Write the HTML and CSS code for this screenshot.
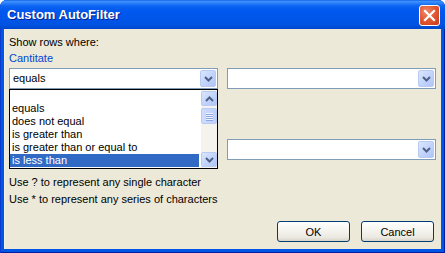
FILE: index.html
```html
<!DOCTYPE html>
<html>
<head>
<meta charset="utf-8">
<link rel="stylesheet" href="styles.css">
</head>
<body>
<div class="window">
  <div class="titlebar">
    <span class="title">Custom AutoFilter</span>
    <span class="close">
      <svg width="13" height="13" viewBox="0 0 13 13"><path d="M2 2 L11 11 M11 2 L2 11" stroke="#fff" stroke-width="2.2" stroke-linecap="square"/></svg>
    </span>
  </div>
  <div class="client">
    <div class="caption">Show rows where:</div>
    <div class="group-label">Cantitate</div>
    <div class="row row1">
      <div class="combo-wrap">
        <div class="combo">
          <span class="value">equals</span>
          <span class="drop"><svg width="9" height="6" viewBox="0 0 9 6"><path d="M1 1 L4.5 4.5 L8 1" fill="none" stroke="#4d6185" stroke-width="2"/></svg></span>
        </div>
        <div class="listbox">
          <ul class="items">
            <li class="blank"></li>
            <li>equals</li>
            <li>does not equal</li>
            <li>is greater than</li>
            <li>is greater than or equal to</li>
            <li class="selected">is less than</li>
          </ul>
          <div class="scrollbar">
            <span class="sbtn"><svg width="9" height="6" viewBox="0 0 9 6"><path d="M1 5 L4.5 1.5 L8 5" fill="none" stroke="#4d6185" stroke-width="2"/></svg></span>
            <span class="thumb"><i></i><i></i><i></i><i></i></span>
            <span class="track"></span>
            <span class="sbtn"><svg width="9" height="6" viewBox="0 0 9 6"><path d="M1 1 L4.5 4.5 L8 1" fill="none" stroke="#4d6185" stroke-width="2"/></svg></span>
          </div>
        </div>
      </div>
      <div class="combo">
        <span class="value"></span>
        <span class="drop"><svg width="9" height="6" viewBox="0 0 9 6"><path d="M1 1 L4.5 4.5 L8 1" fill="none" stroke="#4d6185" stroke-width="2"/></svg></span>
      </div>
    </div>
    <div class="row row2">
      <div class="combo">
        <span class="value"></span>
        <span class="drop"><svg width="9" height="6" viewBox="0 0 9 6"><path d="M1 1 L4.5 4.5 L8 1" fill="none" stroke="#4d6185" stroke-width="2"/></svg></span>
      </div>
      <div class="combo">
        <span class="value"></span>
        <span class="drop"><svg width="9" height="6" viewBox="0 0 9 6"><path d="M1 1 L4.5 4.5 L8 1" fill="none" stroke="#4d6185" stroke-width="2"/></svg></span>
      </div>
    </div>
    <div class="hints">
      <div>Use ? to represent any single character</div>
      <div>Use * to represent any series of characters</div>
    </div>
    <div class="buttons">
      <span class="btn">OK</span>
      <span class="btn">Cancel</span>
    </div>
  </div>
</div>
</body>
</html>
```
FILE: styles.css
```css
html, body {
  margin: 0;
  padding: 0;
  background: #ffffff;
}
.window {
  width: 445px;
  height: 253px;
  box-sizing: border-box;
  display: flex;
  flex-direction: column;
  background: #0055e5;
  border-radius: 7px 7px 0 0;
  overflow: hidden;
  font-family: "Liberation Sans", Arial, sans-serif;
  font-size: 11px;
  color: #000;
  box-shadow: inset 1px 0 0 #0a3ccf, inset -1px 0 0 #001ea0, inset 0 -1px 0 #001ea0;
}
.titlebar {
  height: 29px;
  flex: none;
  display: flex;
  align-items: center;
  justify-content: space-between;
  padding: 0 5px 0 7px;
  background: linear-gradient(to bottom, #0a4fd8 0px, #3d95ff 1px, #2d82fa 3px, #0b63f0 6px, #0058ee 11px, #0055e8 20px, #0052df 25px, #0047cc 29px);
}
.title {
  color: #fff;
  font-weight: bold;
  font-size: 13px;
  text-shadow: 1px 1px 0 #0a1e8c;
  margin-top: -1px;
}
.close {
  width: 21px;
  height: 21px;
  box-sizing: border-box;
  border: 1px solid #fff;
  border-radius: 3px;
  background: radial-gradient(circle at 35% 30%, #f08a6a 0%, #e35a35 45%, #c8391a 100%);
  display: flex;
  align-items: center;
  justify-content: center;
  margin-top: 2px;
}
.client {
  flex: 1;
  margin: 0 4px 4px 4px;
  background: #ece9d8;
  padding: 7px 5px 7px 5px;
  display: flex;
  flex-direction: column;
  box-shadow: inset 1px 0 0 #f4f2e8;
}
.caption {
  line-height: 13px;
}
.group-label {
  line-height: 13px;
  margin-top: 3px;
  color: #0046d5;
}
.row {
  display: flex;
  gap: 9px;
}
.row1 {
  margin-top: 3px;
}
.row2 {
  margin-top: 50px;
}
.combo-wrap {
  position: relative;
  width: 209px;
}
.combo {
  width: 209px;
  height: 21px;
  box-sizing: border-box;
  border: 1px solid #7f9db9;
  background: #fff;
  display: flex;
  padding: 1px 1px 1px 3px;
}
.row2 .combo {
  height: 21px;
}
.value {
  flex: 1;
  line-height: 17px;
}
.drop, .sbtn {
  width: 16px;
  flex: none;
  box-sizing: border-box;
  border: 1px solid #b9cbf3;
  border-radius: 2px;
  background: linear-gradient(to bottom right, #dbe6fd 0%, #c4d5fc 50%, #afc4f8 100%);
  display: flex;
  align-items: center;
  justify-content: center;
}
.listbox {
  position: absolute;
  left: 0;
  top: 21px;
  width: 209px;
  height: 80px;
  box-sizing: border-box;
  border: 1px solid #000;
  background: #fff;
  display: flex;
  z-index: 2;
}
.items {
  list-style: none;
  margin: 0;
  padding: 0 2px 0 0;
  flex: 1;
}
.items li {
  height: 13px;
  line-height: 13px;
  padding-left: 2px;
}
.items li.blank {
  height: 12px;
}
.items li.selected {
  background: #316ac5;
  color: #fff;
}
.scrollbar {
  width: 16px;
  flex: none;
  display: flex;
  flex-direction: column;
  padding: 1px 0;
  background: #f4f3ee;
}
.sbtn {
  height: 15px;
}
.thumb {
  height: 16px;
  margin-top: 2px;
  box-sizing: border-box;
  border: 1px solid #b9cbf3;
  border-radius: 2px;
  background: linear-gradient(to right, #cfdcfd, #bccffb);
  display: flex;
  flex-direction: column;
  align-items: center;
  justify-content: center;
  gap: 1px;
}
.thumb i {
  width: 7px;
  height: 1px;
  background: #eef3ff;
  box-shadow: 0 1px 0 #8ca6e4;
}
.track {
  flex: 1;
}
.hints {
  margin-top: 14px;
  line-height: 17px;
}
.buttons {
  margin-top: auto;
  display: flex;
  justify-content: flex-end;
  gap: 11px;
  padding-right: 2px;
}
.btn {
  width: 73px;
  height: 21px;
  box-sizing: border-box;
  border: 1px solid #003c74;
  border-radius: 3px;
  background: linear-gradient(to bottom, #ffffff 0%, #f6f5f0 40%, #ebe9e1 80%, #d8d4c8 100%);
  display: flex;
  align-items: center;
  justify-content: center;
}
```
